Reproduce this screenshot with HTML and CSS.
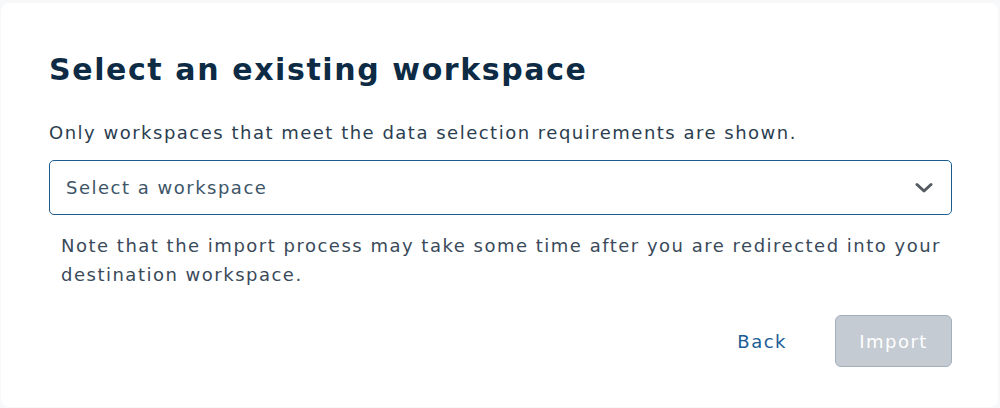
FILE: index.html
```html
<!DOCTYPE html>
<html lang="en">
<head>
<meta charset="utf-8">
<title>Select an existing workspace</title>
<link rel="stylesheet" href="styles.css">
</head>
<body>
<div class="card">
  <h1 class="title">Select an existing workspace</h1>
  <p class="lead">Only workspaces that meet the data selection requirements are shown.</p>
  <div class="select">
    <span class="placeholder">Select a workspace</span>
    <svg class="chevron" width="18" height="12" viewBox="0 0 18 12" aria-hidden="true">
      <path d="M2 2.5 L9 9 L16 2.5" fill="none" stroke="#555b60" stroke-width="3" stroke-linecap="round" stroke-linejoin="round"/>
    </svg>
  </div>
  <p class="note">Note that the import process may take some time after you are redirected into your destination workspace.</p>
  <div class="actions">
    <a class="back" href="#">Back</a>
    <button class="import" disabled>Import</button>
  </div>
</div>
</body>
</html>
```
FILE: styles.css
```css
html, body {
  margin: 0;
  padding: 0;
  background: #f6f8fa;
  font-family: "DejaVu Sans", "Open Sans", sans-serif;
}
.card {
  margin: 3px 2px 0 1px;
  background: #ffffff;
  border-radius: 8px;
  padding: 45px 46px 40px 48px;
  min-height: 400px;
  box-sizing: border-box;
}
.title {
  margin: 0;
  font-size: 30px;
  line-height: 44px;
  font-weight: 600;
  color: #0d2b44;
  letter-spacing: 1.6px;
}
.lead {
  margin: 28px 0 0 0;
  font-size: 18px;
  line-height: 26px;
  color: #2b3e50;
  letter-spacing: 1.5px;
}
.select {
  margin-top: 14px;
  height: 55px;
  box-sizing: border-box;
  border: 1px solid #1d5d8e;
  border-radius: 5px;
  display: flex;
  align-items: center;
  justify-content: space-between;
  padding: 0 18px 0 16px;
}
.placeholder {
  font-size: 18px;
  color: #3d5568;
  letter-spacing: 1.5px;
}
.note {
  margin: 16px 0 0 12px;
  font-size: 18px;
  line-height: 29px;
  color: #3a4a5a;
  letter-spacing: 1.5px;
}
.actions {
  margin-top: 26px;
  display: flex;
  justify-content: flex-end;
  align-items: center;
  gap: 48px;
}
.back {
  color: #1a5c94;
  font-size: 18px;
  letter-spacing: 1.5px;
  text-decoration: none;
}
.import {
  width: 117px;
  height: 52px;
  background: #c4cbd2;
  border: 1px solid #a3afba;
  border-radius: 6px;
  color: #ffffff;
  font-family: inherit;
  font-size: 18px;
  letter-spacing: 1.5px;
}
```
